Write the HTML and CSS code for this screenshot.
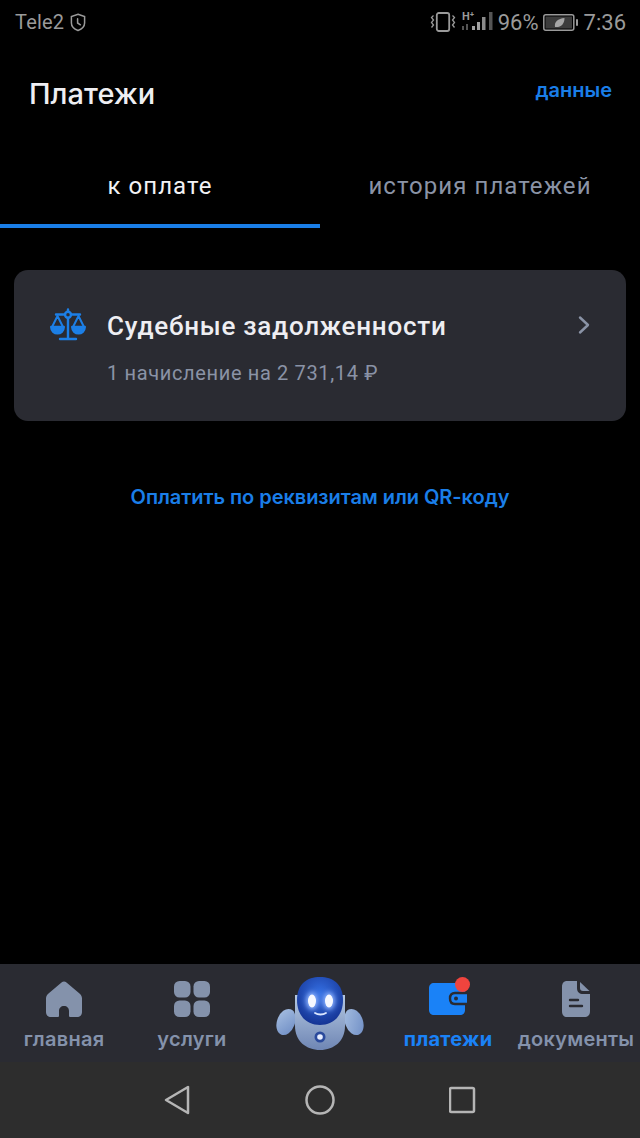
FILE: index.html
```html
<!DOCTYPE html>
<html lang="ru">
<head>
    <meta charset="UTF-8">
    <meta name="viewport" content="width=device-width, initial-scale=1.0">
    <title>Платежи</title>
    <link rel="stylesheet" href="styles.css">
</head>
<body>

<div class="screen">
    <div class="status-bar">
        <div class="status-left">
            <span class="carrier">Tele2</span>
            <svg width="16" height="19" viewBox="0 0 16 19" fill="none" stroke="#9a9a9a" stroke-width="1.5"><path d="M8 1.200 14.600 3.600V10C14.600 13.500 11.800 16 8 17.500 4.200 16 1.400 13.500 1.400 10V3.600Z"/><path d="M7.600 5.800V10L10.400 11.800" stroke-linecap="round"/></svg>
        </div>
        <div class="status-right">
            <svg width="26" height="20" viewBox="0 0 26 20" fill="none" stroke="#9a9a9a"><rect x="6.800" y="1" width="12.400" height="18" rx="2" stroke-width="1.800"/><path d="M3.500 3.500 1.500 5.500 3.500 8 1.500 10.500 3.500 13 1.500 15.500M22.500 3.500 24.500 5.500 22.500 8 24.500 10.500 22.500 13 24.500 15.500" stroke-width="1.300"/></svg>
            <svg class="signal" width="32" height="22" viewBox="0 0 32 22">
                <text x="0" y="9" class="signal-h">H⁺</text>
                <rect x="0" y="15" width="2" height="4" fill="#555"/>
                <rect x="4" y="13" width="2" height="6" fill="#555"/>
                <rect x="10" y="15" width="3" height="4" fill="#a0a0a0"/>
                <rect x="15" y="11" width="3" height="8" fill="#a0a0a0"/>
                <rect x="20" y="6" width="3.500" height="13" fill="#8a8a8a"/>
                <rect x="27" y="1" width="3.500" height="18" fill="#555"/>
            </svg>
            <span class="battery-text">96%</span>
            <svg width="35" height="17" viewBox="0 0 35 17"><rect x="0.800" y="0.800" width="30" height="15.400" rx="2" fill="none" stroke="#9a9a9a" stroke-width="1.500"/><rect x="2.500" y="2.500" width="26.500" height="12" fill="#3c3c3c"/><path d="M12 13C11 8 15 4.500 21.500 4 21.500 10 18 13.500 12 13Z" fill="#a5a5a5"/><rect x="33" y="5" width="2" height="7" rx="1" fill="#9a9a9a"/></svg>
            <span class="clock">7:36</span>
        </div>
    </div>

    <header class="page-header">
        <h1>Платежи</h1>
        <a class="header-link" href="#">данные</a>
    </header>

    <nav class="tabs">
        <div class="tab active">к оплате</div>
        <div class="tab">история платежей</div>
    </nav>

    <main class="content">
        <div class="card">
            <svg class="card-icon" width="36" height="33" viewBox="0 0 36 33" fill="none" stroke="#1c7fe6" stroke-width="2.400" stroke-linecap="round" stroke-linejoin="round">
                <path d="M18 1.500V3.500M18 10V30M10 31H26M6 6.500H15M21 6.500H30"/>
                <circle cx="18" cy="6.800" r="3"/>
                <path d="M7.500 8 2 19H13Z M28.500 8 23 19H34Z" stroke-width="2"/>
                <path d="M1.200 19C1.500 27.500 13.500 27.500 13.800 19Z M22.200 19C22.500 27.500 34.500 27.500 34.800 19Z" fill="#1c7fe6"/>
            </svg>
            <div class="card-text">
                <div class="card-title">Судебные задолженности</div>
                <div class="card-sub">1 начисление на 2 731,14 ₽</div>
            </div>
            <svg class="chevron" width="14" height="20" viewBox="0 0 14 20" fill="none" stroke="#8a93a6" stroke-width="2.400" stroke-linecap="round" stroke-linejoin="round"><path d="M3 2.500 11 10 3 17.500"/></svg>
        </div>
        <a class="pay-link" href="#">Оплатить по реквизитам или QR-коду</a>
    </main>

    <div class="bottom-nav">
        <div class="nav-item">
            <svg width="38" height="38" viewBox="0 0 38 38"><path fill-rule="evenodd" fill="#8492ab" d="M16.500 2.500C18 1.200 20 1.200 21.500 2.500L34.500 13.500C36 14.800 37 16.500 37 18.500V32C37 35 35 37 32 37H25.500C24.500 37 24 36.500 24 35.500V31C24 28 22 26 19 26 16 26 14 28 14 31V35.500C14 36.500 13.500 37 12.500 37H6C3 37 1 35 1 32V18.500C1 16.500 2 14.800 3.500 13.500Z"/></svg>
            <span>главная</span>
        </div>
        <div class="nav-item">
            <svg width="38" height="38" viewBox="0 0 38 38" fill="#8492ab"><rect x="1" y="1" width="16.500" height="16.500" rx="5.500"/><rect x="20.500" y="1" width="16.500" height="16.500" rx="5.500"/><rect x="1" y="20.500" width="16.500" height="16.500" rx="5.500"/><rect x="20.500" y="20.500" width="16.500" height="16.500" rx="5.500"/></svg>
            <span>услуги</span>
        </div>
        <div class="nav-item robot-item">
            <svg width="92" height="78" viewBox="0 0 92 78">
                <defs>
                    <radialGradient id="head" cx="50%" cy="35%" r="70%"><stop offset="0" stop-color="#3570e4"/><stop offset="1" stop-color="#122f8e"/></radialGradient>
                    <linearGradient id="body" x1="0" y1="0" x2="0" y2="1"><stop offset="0" stop-color="#b4c8e2"/><stop offset="1" stop-color="#6f86b4"/></linearGradient>
                    <linearGradient id="arm" x1="0" y1="0" x2="1" y2="1"><stop offset="0" stop-color="#a8c0e2"/><stop offset="1" stop-color="#6d8cc4"/></linearGradient>
                    <filter id="glow" x="-100%" y="-100%" width="300%" height="300%"><feGaussianBlur stdDeviation="2.500"/></filter>
                </defs>
                <ellipse cx="12" cy="46" rx="9" ry="13.500" transform="rotate(20 12 46)" fill="url(#arm)"/>
                <ellipse cx="80" cy="46" rx="9" ry="13.500" transform="rotate(-20 80 46)" fill="url(#arm)"/>
                <path d="M21 19H71V50C71 65 60 74 46 74 32 74 21 65 21 50Z" fill="url(#body)"/>
                <path d="M23 24C23 8 33 1 46 1 59 1 69 8 69 24 69 41 58 49 46 49 34 49 23 41 23 24Z" fill="url(#head)"/>
                <ellipse cx="38" cy="25" rx="6" ry="9" fill="#8fb4ff" filter="url(#glow)"/>
                <ellipse cx="55" cy="25" rx="6" ry="9" fill="#8fb4ff" filter="url(#glow)"/>
                <ellipse cx="38" cy="25" rx="4" ry="6.500" fill="#f6f8ff"/>
                <ellipse cx="55" cy="25" rx="4" ry="6.500" fill="#f6f8ff"/>
                <path d="M41 37C44 39 49 39 52 37" fill="none" stroke="#dbe6ff" stroke-width="1.800" stroke-linecap="round"/>
                <circle cx="46" cy="61" r="5.500" fill="#2b4a9c"/>
                <circle cx="46" cy="61" r="2.800" fill="#e8eeff"/>
            </svg>
        </div>
        <div class="nav-item active">
            <span class="wallet">
                <svg width="38" height="38" viewBox="0 0 38 38"><path fill="#1a82f7" d="M5 3H31C34 3 36 5 36 8V30C36 33 34 35 31 35H5C2 35 0 33 0 30V8C0 5 2 3 5 3Z"/><path d="M38 13H26C23 13 21 15 21 18.500 21 22 23 24 26 24H38" fill="#1a82f7" stroke="#2a2b32" stroke-width="2.400"/><circle cx="27" cy="18.500" r="2" fill="#2a2b32"/></svg>
                <i class="badge"></i>
            </span>
            <span>платежи</span>
        </div>
        <div class="nav-item">
            <svg width="30" height="38" viewBox="0 0 30 38"><path fill="#8492ab" d="M6 1H16V8C16 12 18.500 14 22 14H29V31C29 35 27 37 23 37H6C3 37 1 35 1 31V7C1 3 3 1 6 1Z"/><path fill="#8492ab" d="M19 2 28.500 11H22C20 11 19 10 19 8Z"/><path d="M9 20H17M9 26H21" stroke="#2a2b32" stroke-width="2.400" stroke-linecap="round"/></svg>
            <span>документы</span>
        </div>
    </div>

    <div class="system-nav">
        <svg width="28" height="32" viewBox="0 0 28 32" fill="none" stroke="#b5b5b5" stroke-width="2.500" stroke-linejoin="round"><path d="M25 3V29L3 16Z"/></svg>
        <svg width="30" height="30" viewBox="0 0 30 30" fill="none" stroke="#b5b5b5" stroke-width="2.500"><circle cx="15" cy="15" r="13.500"/></svg>
        <svg width="28" height="28" viewBox="0 0 28 28" fill="none" stroke="#b5b5b5" stroke-width="2.500" stroke-linejoin="round"><rect x="1" y="2" width="24" height="24" rx="1.500"/></svg>
    </div>
</div>

</body>
</html>
```

FILE: styles.css
```css
* {
    box-sizing: border-box;
}

body {
    margin: 0;
    background-color: #000;
    font-family: 'Roboto', sans-serif;
}

a {
    text-decoration: none;
}

.screen {
    width: 640px;
    height: 1138px;
    display: flex;
    flex-direction: column;
    background-color: #000;
    overflow: hidden;
}

.status-bar {
    height: 44px;
    padding: 0 14px 0 15px;
    display: flex;
    justify-content: space-between;
    align-items: center;
    color: #9a9a9a;
    font-size: 22px;
}

.status-left,
.status-right {
    display: flex;
    align-items: center;
}

.status-left {
    gap: 6px;
}

.status-right {
    gap: 4px;
}

.carrier {
    font-size: 20px;
    letter-spacing: 0.2px;
}

.signal {
    margin-left: 2px;
}

.signal-h {
    font-size: 11px;
    font-weight: 700;
    fill: #9a9a9a;
}

.clock {
    margin-left: 2px;
}

.page-header {
    height: 100px;
    padding: 0 28px 0 29px;
    display: flex;
    justify-content: space-between;
    align-items: flex-start;
}

.page-header h1 {
    margin: 32px 0 0;
    font-family: 'Inter', sans-serif;
    font-size: 29px;
    font-weight: 500;
    line-height: 36px;
    color: #eeeef2;
}

.header-link {
    margin-top: 33px;
    font-family: 'Inter', sans-serif;
    font-size: 20px;
    font-weight: 600;
    line-height: 26px;
    color: #1a7ee8;
}

.tabs {
    display: flex;
    height: 84px;
}

.tab {
    flex: 1;
    padding-top: 27px;
    text-align: center;
    font-size: 24px;
    letter-spacing: 1.05px;
    line-height: 30px;
    color: #8a93a6;
    border-bottom: 4px solid transparent;
}

.tab.active {
    color: #f2f2f5;
    border-bottom-color: #1a7ee8;
}

.content {
    flex: 1;
    padding: 42px 14px 0;
    display: flex;
    flex-direction: column;
    align-items: stretch;
}

.card {
    height: 151px;
    padding: 0 35px 0 36px;
    display: flex;
    align-items: center;
    background-color: #2a2b32;
    border-radius: 14px;
}

.card-icon {
    flex-shrink: 0;
    margin-right: 21px;
    margin-top: -42px;
}

.card-text {
    flex: 1;
    margin-top: 4px;
}

.card-title {
    font-size: 26px;
    font-weight: 500;
    line-height: 34px;
    letter-spacing: 0.75px;
    color: #eeeef2;
}

.card-sub {
    margin-top: 17px;
    font-size: 20px;
    line-height: 26px;
    letter-spacing: 0.65px;
    color: #8a93a6;
}

.chevron {
    margin-top: -42px;
}

.pay-link {
    margin-top: 63px;
    text-align: center;
    font-family: 'Inter', sans-serif;
    font-size: 20px;
    font-weight: 600;
    line-height: 26px;
    letter-spacing: -0.05px;
    color: #1a7ee8;
}

.bottom-nav {
    height: 98px;
    display: grid;
    grid-template-columns: repeat(5, 128px);
    background-color: #2a2b32;
}

.nav-item {
    padding-top: 16px;
    display: flex;
    flex-direction: column;
    align-items: center;
    font-family: 'Inter', sans-serif;
    font-size: 20px;
    font-weight: 600;
    letter-spacing: 0.25px;
    color: #8492ab;
}

.nav-item span {
    line-height: 26px;
    margin-top: 8px;
}

.nav-item.active {
    color: #1a82f7;
    font-weight: 700;
}

.robot-item {
    padding-top: 12px;
}

.nav-item .wallet {
    position: relative;
    display: block;
    height: 38px;
    margin-top: 0;
}

.badge {
    position: absolute;
    top: -3px;
    right: -3px;
    width: 15px;
    height: 15px;
    border-radius: 50%;
    background-color: #f0443e;
}

.system-nav {
    height: 76px;
    padding: 0 163px;
    display: flex;
    justify-content: space-between;
    align-items: center;
    background-color: #2d2d2d;
}
```
